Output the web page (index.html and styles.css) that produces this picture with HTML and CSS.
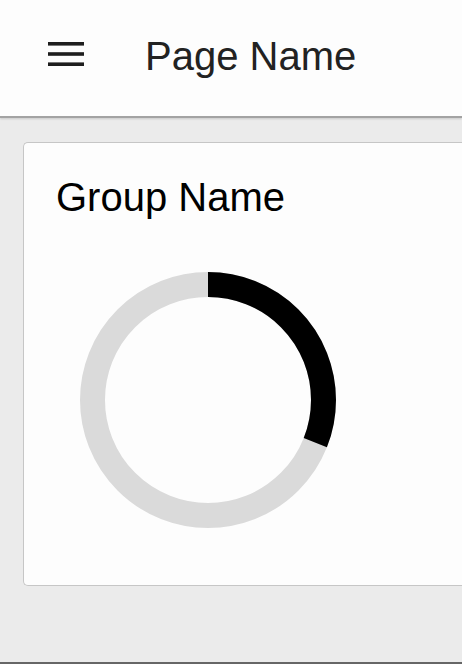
FILE: index.html
```html
<!DOCTYPE html>
<html lang="en">
<head>
<meta charset="utf-8">
<title>Page Name</title>
<link rel="stylesheet" href="styles.css">
</head>
<body>
<div class="app">
  <header class="topbar">
    <svg class="menu-icon" width="36" height="24" viewBox="0 0 36 24" aria-hidden="true">
      <rect x="0" y="0" width="36" height="3.6" fill="#1e1e1e"/>
      <rect x="0" y="10.2" width="36" height="3.6" fill="#1e1e1e"/>
      <rect x="0" y="20.4" width="36" height="3.6" fill="#1e1e1e"/>
    </svg>
    <h1 class="page-title">Page Name</h1>
  </header>
  <main class="content">
    <section class="card">
      <h2 class="group-title">Group Name</h2>
      <svg class="donut" width="256" height="256" viewBox="0 0 256 256" aria-hidden="true">
        <circle cx="128" cy="128" r="115.5" fill="none" stroke="#dadada" stroke-width="25"/>
        <circle cx="128" cy="128" r="115.5" fill="none" stroke="#000" stroke-width="25"
                stroke-dasharray="225 800" transform="rotate(-90 128 128)"/>
      </svg>
    </section>
  </main>
</div>
</body>
</html>
```

FILE: styles.css
```css
html, body {
  margin: 0;
  padding: 0;
}
body {
  background: #ebebeb;
  font-family: "Liberation Sans", Arial, Helvetica, sans-serif;
  overflow: hidden;
}
.app {
  height: 664px;
  display: flex;
  flex-direction: column;
  box-sizing: border-box;
  border-bottom: 2px solid #666666;
}
.topbar {
  height: 118px;
  box-sizing: border-box;
  background: #fdfdfd;
  border-bottom: 2px solid #a3a3a3;
  box-shadow: 0 1px 2px rgba(0, 0, 0, 0.15);
  display: flex;
  align-items: center;
  padding: 0 0 4px 48px;
  position: relative;
  z-index: 1;
}
.menu-icon {
  display: block;
  margin-top: -4px;
}
.page-title {
  margin: 0 0 0 61px;
  font-size: 40px;
  font-weight: normal;
  line-height: 46px;
  color: #222222;
}
.content {
  flex: 1;
  display: flex;
  align-items: flex-start;
  padding: 24px 0 0 23px;
}
.card {
  flex: 1;
  height: 444px;
  box-sizing: border-box;
  background: #fdfdfd;
  border: 1.5px solid #c6c6c6;
  border-right: none;
  border-radius: 5px 0 0 5px;
  padding: 31px 0 0 32px;
}
.group-title {
  margin: 0;
  font-size: 40px;
  font-weight: normal;
  line-height: 46px;
  color: #000000;
}
.donut {
  display: block;
  margin: 52px 0 0 24px;
}
```
